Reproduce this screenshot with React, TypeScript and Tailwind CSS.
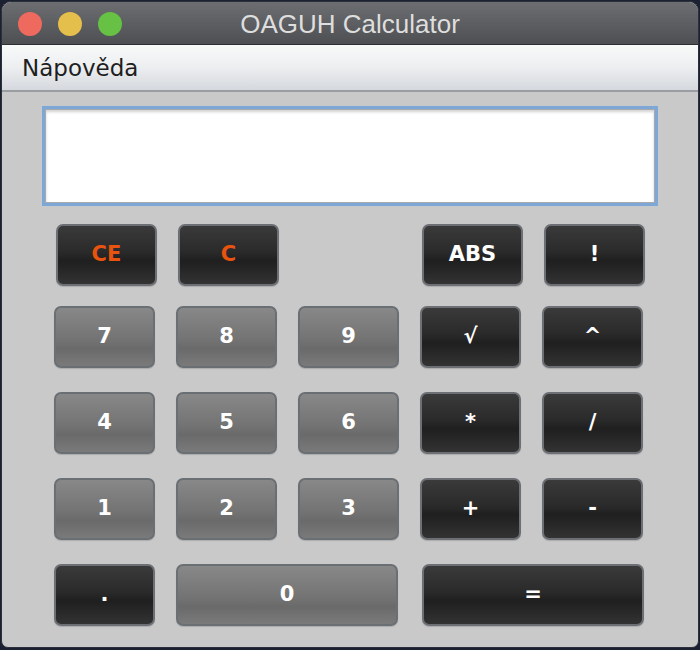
import React from "react";

type Btn = { label: string; kind: "dark" | "gray" | "accent"; wide?: boolean };

const rows: Btn[][] = [
  [
    { label: "7", kind: "gray" },
    { label: "8", kind: "gray" },
    { label: "9", kind: "gray" },
    { label: "√", kind: "dark" },
    { label: "^", kind: "dark" },
  ],
  [
    { label: "4", kind: "gray" },
    { label: "5", kind: "gray" },
    { label: "6", kind: "gray" },
    { label: "*", kind: "dark" },
    { label: "/", kind: "dark" },
  ],
  [
    { label: "1", kind: "gray" },
    { label: "2", kind: "gray" },
    { label: "3", kind: "gray" },
    { label: "+", kind: "dark" },
    { label: "-", kind: "dark" },
  ],
];

function Key({ label, kind, wide }: Btn) {
  const base =
    "h-[62px] rounded-[7px] border-2 flex items-center justify-center font-bold text-[21px] shadow-[0_1px_1px_rgba(0,0,0,0.15)]";
  const width = wide ? "w-[222px]" : "w-[101px]";
  const skin =
    kind === "gray"
      ? "border-[#6a6f74] bg-[linear-gradient(#888888,#737373_55%,#6a6a6a_70%,#7a7a7a)] text-white"
      : "border-[#6c7075] bg-[linear-gradient(#3a3a3a,#2a2a2a_45%,#1f1f1f_60%,#333333)] " +
        (kind === "accent" ? "text-[#e8540f]" : "text-white");
  return (
    <button
      className={`${base} ${width} ${skin}`}
      style={{ fontFamily: '"DejaVu Sans", Verdana, sans-serif' }}
    >
      {label}
    </button>
  );
}

export default function App() {
  return (
    <div className="w-[700px] h-[650px] bg-[#1b2130] p-[1px]">
      <div className="w-[698px] h-[647px] rounded-t-[10px] rounded-b-[7px] overflow-hidden border border-[#2b303a] bg-[#c9c9c9] flex flex-col">
        {/* title bar */}
        <div className="relative h-[43px] shrink-0 bg-[linear-gradient(#6d6e71,#4e4f52)] border-b border-[#2e2f33] flex items-center justify-center">
          <div className="absolute left-[16px] top-[10px] flex gap-[16px]">
            <span className="w-[24px] h-[24px] rounded-full bg-[#ee6a5f]" />
            <span className="w-[24px] h-[24px] rounded-full bg-[#e5bf4b]" />
            <span className="w-[24px] h-[24px] rounded-full bg-[#66c145]" />
          </div>
          <span
            className="text-[26px] text-[#dedede] leading-none pt-[2px]"
            style={{ fontFamily: '"Liberation Sans", Arial, sans-serif' }}
          >
            OAGUH Calculator
          </span>
        </div>

        {/* menu bar */}
        <div className="h-[47px] shrink-0 bg-[linear-gradient(#f8f9f9,#eceef0_50%,#d5d8dd)] border-b-2 border-[#9a9da2] flex items-center pl-[20px]">
          <span
            className="text-[23px] text-[#1e1e1e] pt-[2px]"
            style={{ fontFamily: '"DejaVu Sans", Verdana, sans-serif' }}
          >
            Nápověda
          </span>
        </div>

        {/* content */}
        <div className="flex flex-col pt-[14px]">
          <div className="ml-[40px] w-[616px] h-[100px] border-[3px] border-[#7ca7d6] bg-white">
            <div className="w-full h-full border border-[#a9a9a9] shadow-[inset_0_2px_3px_rgba(0,0,0,0.18)]" />
          </div>

          <div className="ml-[54px] mt-[18px] flex gap-[21px]">
            <Key label="CE" kind="accent" />
            <Key label="C" kind="accent" />
            <div className="w-[101px]" />
            <Key label="ABS" kind="dark" />
            <Key label="!" kind="dark" />
          </div>

          <div className="ml-[52px] mt-[20px] flex flex-col gap-[24px]">
            {rows.map((r, i) => (
              <div key={i} className="flex gap-[21px]">
                {r.map((b) => (
                  <Key key={b.label} {...b} />
                ))}
              </div>
            ))}
            <div className="flex gap-[21px]">
              <Key label="." kind="dark" />
              <Key label="0" kind="gray" wide />
              <div className="ml-[3px] flex">
                <Key label="=" kind="dark" wide />
              </div>
            </div>
          </div>
        </div>
      </div>
    </div>
  );
}
